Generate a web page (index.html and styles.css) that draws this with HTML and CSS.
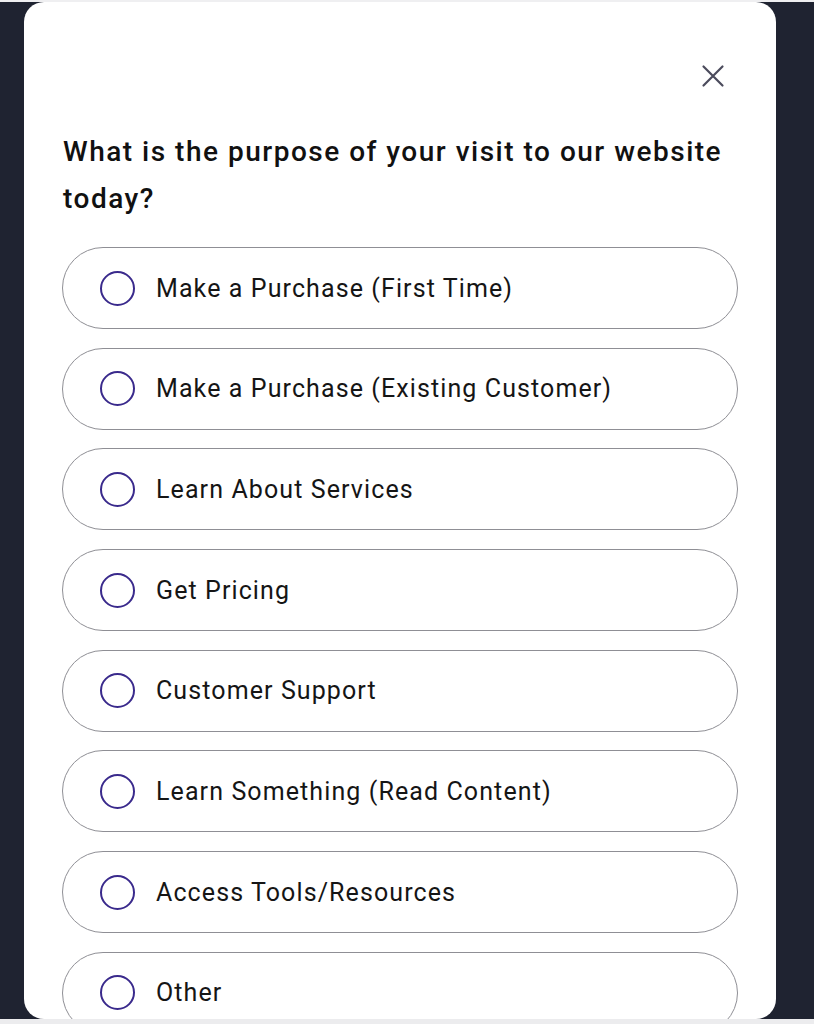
FILE: index.html
```html
<!DOCTYPE html>
<html lang="en">
<head>
<meta charset="utf-8">
<title>Survey</title>
<link rel="stylesheet" href="styles.css">
</head>
<body>
<div class="topbar"></div>
<div class="stage">
  <div class="modal">
    <div class="modal-head">
      <button class="close" aria-label="Close">
        <svg viewBox="0 0 24 24" width="24" height="24"><path d="M2.5 2.5 L21.5 21.5 M21.5 2.5 L2.5 21.5" stroke="#4b4b5c" stroke-width="2.2" stroke-linecap="round" fill="none"/></svg>
      </button>
    </div>
    <h1 class="title">What is the purpose of your visit to our website today?</h1>
    <ul class="options">
      <li class="option"><span class="radio"></span><span class="label">Make a Purchase (First Time)</span></li>
      <li class="option"><span class="radio"></span><span class="label">Make a Purchase (Existing Customer)</span></li>
      <li class="option"><span class="radio"></span><span class="label">Learn About Services</span></li>
      <li class="option"><span class="radio"></span><span class="label">Get Pricing</span></li>
      <li class="option"><span class="radio"></span><span class="label">Customer Support</span></li>
      <li class="option"><span class="radio"></span><span class="label">Learn Something (Read Content)</span></li>
      <li class="option"><span class="radio"></span><span class="label">Access Tools/Resources</span></li>
      <li class="option"><span class="radio"></span><span class="label">Other</span></li>
    </ul>
  </div>
</div>
<div class="bottombar"></div>
</body>
</html>
```

FILE: styles.css
```css
html, body {
  margin: 0;
  padding: 0;
}
body {
  width: 814px;
  height: 1024px;
  overflow: hidden;
  background: #1f2331;
  font-family: Roboto, "Liberation Sans", Arial, sans-serif;
  display: flex;
  flex-direction: column;
}
.topbar {
  height: 2px;
  background: #efeff1;
  flex: none;
}
.bottombar {
  height: 5px;
  background: #ececee;
  flex: none;
}
.stage {
  flex: 1;
  display: flex;
  padding-left: 24px;
  overflow: hidden;
}
.modal {
  width: 752px;
  box-sizing: border-box;
  background: #ffffff;
  border-radius: 20px;
  overflow: hidden;
  padding: 0 38px;
}
.modal-head {
  display: flex;
  justify-content: flex-end;
  padding-top: 62px;
  padding-right: 13px;
}
.close {
  width: 24px;
  height: 24px;
  padding: 0;
  border: 0;
  background: transparent;
  display: flex;
}
.title {
  margin: 40px 0 0 1px;
  font-size: 28px;
  line-height: 47px;
  font-weight: 500;
  letter-spacing: 1.5px;
  color: #111111;
}
.options {
  list-style: none;
  margin: 25px 0 0 0;
  padding: 0;
  display: flex;
  flex-direction: column;
  gap: 18.7px;
}
.option {
  height: 82px;
  box-sizing: border-box;
  border: 1.5px solid #8f8f95;
  border-radius: 41px;
  display: flex;
  align-items: center;
  padding-left: 37px;
  flex: none;
}
.radio {
  width: 35px;
  height: 35px;
  box-sizing: border-box;
  border: 2px solid #3a2a8c;
  border-radius: 50%;
  flex: none;
}
.label {
  margin-left: 21px;
  font-size: 25px;
  letter-spacing: 1.1px;
  color: #151515;
}
```
